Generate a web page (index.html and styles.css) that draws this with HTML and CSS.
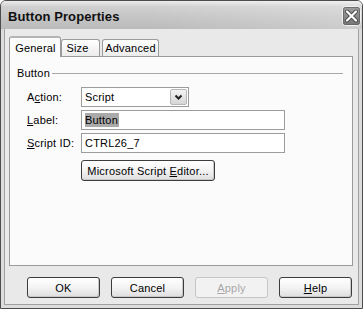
FILE: index.html
```html
<!DOCTYPE html>
<html>
<head>
<meta charset="utf-8">
<link rel="stylesheet" href="styles.css">
</head>
<body>
<div class="window">
  <div class="titlebar">
    <span class="title">Button Properties</span>
    <div class="close">
      <svg width="19" height="20" viewBox="0 0 19 20">
        <defs>
          <linearGradient id="cg" x1="0" y1="0" x2="0" y2="1">
            <stop offset="0" stop-color="#a0a0a0"/>
            <stop offset="1" stop-color="#747474"/>
          </linearGradient>
        </defs>
        <rect x="0.5" y="0.5" width="18" height="19" rx="3" fill="url(#cg)" stroke="#f2f2f2"/>
        <rect x="1.5" y="1.5" width="16" height="17" rx="2" fill="none" stroke="#626262" stroke-width="0.8"/>
        <path d="M5 5.5 L14 14.5 M14 5.5 L5 14.5" stroke="#4a4a4a" stroke-width="4" stroke-linecap="round"/>
        <path d="M5 5.5 L14 14.5 M14 5.5 L5 14.5" stroke="#ffffff" stroke-width="2.2" stroke-linecap="round"/>
      </svg>
    </div>
  </div>
  <div class="body">
    <div class="tabs">
      <div class="tab tab-active">General</div>
      <div class="tab tab-size">Size</div>
      <div class="tab tab-adv">Advanced</div>
    </div>
    <div class="panel">
      <div class="group-head">
        <span>Button</span>
        <div class="rule"></div>
      </div>
      <div class="form">
        <div class="row">
          <span class="lbl">A<u>c</u>tion:</span>
          <div class="select">
            <span class="select-text">Script</span>
            <div class="drop">
              <svg width="9" height="7" viewBox="0 0 9 7"><path d="M1.5 1.5 L4.5 4.5 L7.5 1.5" fill="none" stroke="#222" stroke-width="2"/></svg>
            </div>
          </div>
        </div>
        <div class="row">
          <span class="lbl"><u>L</u>abel:</span>
          <div class="input"><span class="sel">Button</span></div>
        </div>
        <div class="row">
          <span class="lbl"><u>S</u>cript ID:</span>
          <div class="input">CTRL26_7</div>
        </div>
        <div class="row row-btn">
          <span class="lbl"></span>
          <div class="btn btn-wide"><span>Microsoft Script <u>E</u>ditor...</span></div>
        </div>
      </div>
    </div>
    <div class="buttons">
      <div class="btn">OK</div>
      <div class="btn">Cancel</div>
      <div class="btn btn-disabled"><span><u>A</u>pply</span></div>
      <div class="btn"><span><u>H</u>elp</span></div>
    </div>
  </div>
</div>
</body>
</html>
```
FILE: styles.css
```css
html, body {
  margin: 0;
  padding: 0;
  background: #ffffff;
}
body {
  font-family: "Liberation Sans", Arial, sans-serif;
  font-size: 11px;
  letter-spacing: 0.2px;
  color: #000;
}
.window {
  width: 363px;
  height: 309px;
  box-sizing: border-box;
  border: 1px solid #4c4c4c;
  border-radius: 6px 6px 0 0;
  overflow: hidden;
  display: flex;
  flex-direction: column;
  background: #e9e9e9;
}
.titlebar {
  height: 28px;
  flex: none;
  display: flex;
  align-items: center;
  justify-content: space-between;
  padding: 0 1px 0 7px;
  background: linear-gradient(to right, rgba(255,255,255,0) 40%, rgba(255,255,255,0.25) 100%),
              linear-gradient(to bottom, #ececec 0%, #d0d0d0 20%, #c4c4c4 60%, #bbbbbb 100%);
}
.title {
  font-weight: bold;
  font-size: 13px;
  color: #101010;
  letter-spacing: 0.1px;
  padding-top: 2px;
}
.close {
  display: flex;
  width: 19px;
  height: 20px;
  margin-top: 2px;
}
.body {
  flex: 1;
  display: flex;
  flex-direction: column;
  border-style: solid;
  border-width: 0 3px 3px 3px;
  border-color: #dcdcdc;
  box-shadow: inset 1px 0 0 #a0a0a0, inset -1px 0 0 #a0a0a0, inset 0 -1px 0 #a0a0a0;
  padding: 7px 6px 7px 5px;
  background: #e9e9e9;
}
.tabs {
  display: flex;
  align-items: flex-end;
  height: 20px;
  position: relative;
  z-index: 2;
}
.tab {
  box-sizing: border-box;
  height: 17px;
  border: 1px solid #9a9a9a;
  border-bottom: none;
  border-radius: 3px 3px 0 0;
  background: linear-gradient(to bottom, #ffffff, #ececec);
  padding: 2px 0 0 0;
  text-align: center;
}
.tab-active {
  width: 52px;
  height: 21px;
  margin-bottom: -1px;
  background: #fbfbfb;
  padding-top: 4px;
  border-top: 2px solid #b4b4b4;
  padding-left: 1px;
}
.tab-size {
  width: 39px;
  padding-right: 6px;
}
.tab-adv {
  width: 57px;
  margin-left: 2px;
}
.panel {
  height: 210px;
  box-sizing: border-box;
  border: 1px solid #9a9a9a;
  background: #fbfbfb;
  padding: 9px 9px 0 7px;
  display: flex;
  flex-direction: column;
}
.group-head {
  display: flex;
  align-items: center;
  height: 13px;
}
.rule {
  flex: 1;
  height: 1px;
  background: #a8a8a8;
  margin-left: 2px;
  margin-top: 1px;
}
.form {
  display: flex;
  flex-direction: column;
  gap: 3px;
  padding: 8px 0 0 10px;
}
.row {
  display: flex;
  align-items: center;
  height: 20px;
}
.row-btn {
  height: 21px;
  margin-top: 4px;
}
.lbl {
  width: 54px;
  flex: none;
}
.select {
  width: 108px;
  height: 20px;
  box-sizing: border-box;
  border: 1px solid #9c9c9c;
  background: #fff;
  display: flex;
  align-items: center;
  justify-content: space-between;
  padding: 0 1px 0 3px;
}
.drop {
  width: 17px;
  height: 16px;
  box-sizing: border-box;
  border: 1px solid #b8b8b8;
  border-radius: 2px;
  background: linear-gradient(to bottom, #f4f4f4, #d6d6d6);
  display: flex;
  align-items: center;
  justify-content: center;
}
.input {
  width: 204px;
  height: 20px;
  box-sizing: border-box;
  border: 1px solid #9c9c9c;
  background: #fff;
  display: flex;
  align-items: center;
  padding: 0 2px 0 3px;
}
.sel {
  background: #aaaaaa;
  padding: 1px 1px 1px 0;
}
.btn {
  width: 73px;
  height: 21px;
  box-sizing: border-box;
  border: 1px solid #3c3c3c;
  border-radius: 3px;
  background: linear-gradient(to bottom, #ffffff 0%, #f3f3f3 50%, #dedede 100%);
  box-shadow: inset -1px -1px 0 #c8c8c8;
  display: flex;
  align-items: center;
  justify-content: center;
}
.btn-wide {
  width: 134px;
}
.btn-disabled {
  color: #a8a8a8;
  border-color: #c6c6c6;
  background: #f2f2f2;
  box-shadow: none;
}
.buttons {
  display: flex;
  gap: 11px;
  justify-content: flex-end;
  margin-top: 11px;
  padding-right: 1px;
}
u {
  text-decoration-thickness: 1px;
  text-underline-offset: 1px;
}
```
